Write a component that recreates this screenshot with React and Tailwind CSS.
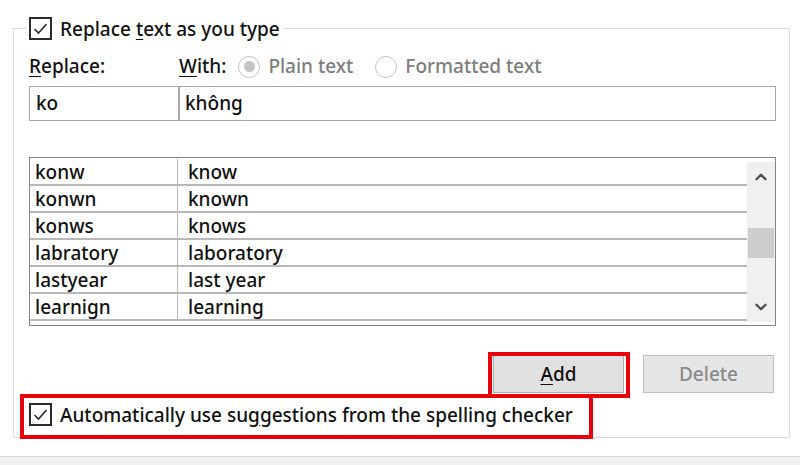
import { ChevronUp, ChevronDown } from "lucide-react";

const rows = [
  ["konw", "know"],
  ["konwn", "known"],
  ["konws", "knows"],
  ["labratory", "laboratory"],
  ["lastyear", "last year"],
  ["learnign", "learning"],
];

function CheckBox() {
  return (
    <span className="flex h-[23px] w-[23px] shrink-0 items-center justify-center border-2 border-[#2b2b2b] bg-white">
      <svg width="17" height="17" viewBox="0 0 17 17" fill="none">
        <path d="M2.5 9 L6.5 13 L14.5 4" stroke="#2b2b2b" strokeWidth="1.6" />
      </svg>
    </span>
  );
}

function Radio({ checked }) {
  return (
    <span className="flex h-[22px] w-[22px] items-center justify-center rounded-full border-[1.5px] border-[#c4c4c4] bg-white">
      {checked && <span className="h-[11px] w-[11px] rounded-full bg-[#c4c4c4]" />}
    </span>
  );
}

export default function App() {
  return (
    <div className="relative h-[465px] w-[800px] overflow-hidden bg-white text-[19px] font-medium text-[#111] font-['Noto_Sans',sans-serif]">
      <fieldset className="ml-[13px] mt-[16px] w-[777px] border border-[#dcdcdc]">
        <legend className="ml-[12px] flex h-[24px] items-center gap-[8px] bg-white px-[3px] leading-[22px]">
          <CheckBox />
          <span className="pt-[2px]">
            Replace <span className="underline underline-offset-[3px]">t</span>ext as you type
          </span>
        </legend>

        <div className="pb-[11px] pl-[15px] pr-[13px]">
          <div className="mt-[15px] flex h-[23px] items-center">
            <span className="w-[150px]">
              <span className="underline underline-offset-[3px]">R</span>eplace:
            </span>
            <span className="mr-[12px]">
              <span className="underline underline-offset-[3px]">W</span>ith:
            </span>
            <div className="flex items-center gap-[8px] text-[#7d7d7d]">
              <Radio checked />
              <span className="mr-[14px]">Plain text</span>
              <Radio />
              <span>Formatted text</span>
            </div>
          </div>

          <div className="mt-[8px] flex h-[35px]">
            <div className="flex w-[150px] items-center border border-[#a8a8a8] px-[6px]">ko</div>
            <div className="flex flex-1 items-center border border-[#a8a8a8] px-[5px]">không</div>
          </div>

          <div className="mt-[36px] flex h-[169px] border border-[#858585] pb-[3px]">
            <div className="flex-1 pt-[1px]">
              {rows.map(([a, b]) => (
                <div key={a} className="flex h-[27px] border-b-2 border-[#b8b8b8]">
                  <div className="flex w-[148px] items-center border-r border-[#b8b8b8] pl-[5px] pt-[1px]">{a}</div>
                  <div className="flex items-center pl-[10px] pt-[1px]">{b}</div>
                </div>
              ))}
            </div>
            <div className="mt-[4px] flex w-[28px] flex-col items-center justify-between bg-[#f0f0f0] py-[6px]">
              <ChevronUp size={18} strokeWidth={3.2} className="text-[#505050]" />
              <div className="mt-[2px] h-[30px] w-[26px] bg-[#cdcdcd]" />
              <ChevronDown size={18} strokeWidth={3.2} className="text-[#505050]" />
            </div>
          </div>

          <div className="mt-[29px] flex justify-end gap-[19px] pr-[2px]">
            <button className="h-[38px] w-[131px] border border-[#adadad] bg-[#e1e1e1]">
              <span className="underline underline-offset-[3px]">A</span>dd
            </button>
            <button className="h-[38px] w-[131px] border border-[#bfbfbf] bg-[#e6e6e6] text-[#8a8a8a]">Delete</button>
          </div>

          <div className="mt-[10px] flex h-[23px] items-center gap-[8px]">
            <CheckBox />
            <span className="pt-[2px]">
              Automatically use su<span className="underline underline-offset-[3px]">g</span>gestions from the spelling checker
            </span>
          </div>
        </div>
      </fieldset>

      <div className="mt-[18px] h-[20px] border-t border-[#dadada] bg-[#f0f0f0]" />

      <div className="absolute left-[488px] top-[352px] h-[46px] w-[142px] border-4 border-[#e8000b]" />
      <div className="absolute left-[20px] top-[394px] h-[45px] w-[573px] border-4 border-[#e8000b]" />
    </div>
  );
}
